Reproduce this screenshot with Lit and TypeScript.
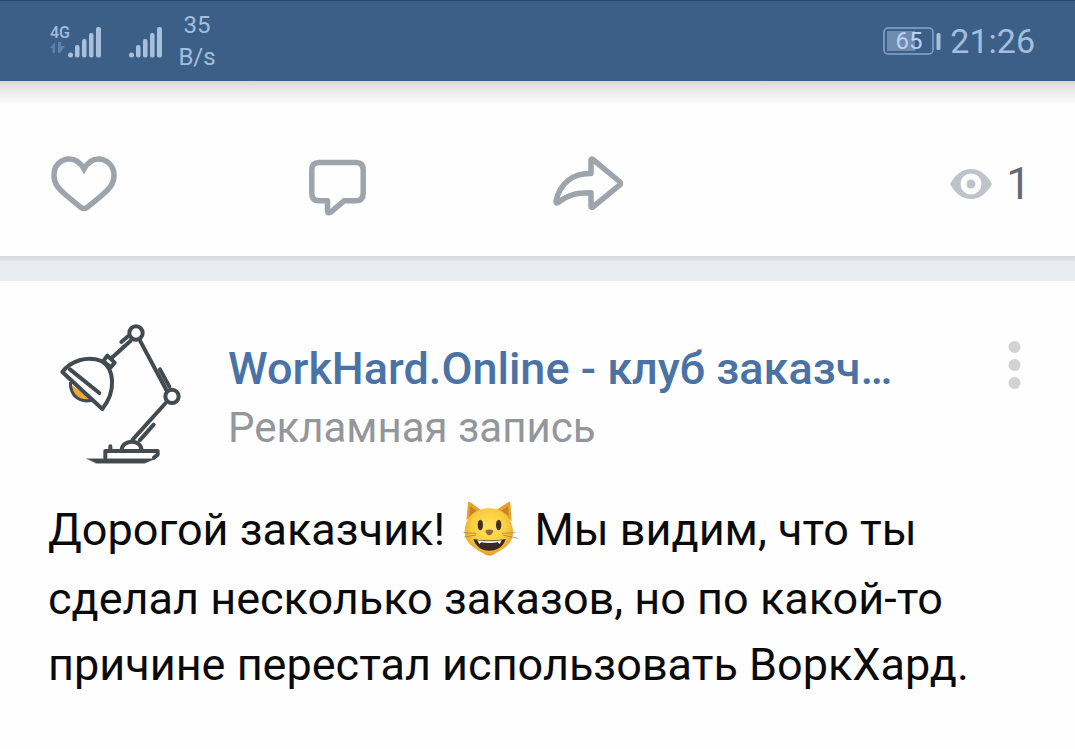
import { LitElement, html, css, svg } from "lit";
import { customElement } from "lit/decorators.js";

const signal = svg`
  <g fill="#a9c0dc">
    <circle cx="2.5" cy="30" r="2.5"/>
    <rect x="7" y="20" width="4.5" height="12.5" rx="2"/>
    <rect x="14" y="14" width="4.5" height="18.5" rx="2"/>
    <rect x="21" y="8" width="4.5" height="24.5" rx="2"/>
    <rect x="28" y="2" width="5" height="30.5" rx="2"/>
  </g>`;

@customElement("status-bar")
class StatusBar extends LitElement {
  static styles = css`
    :host { display: block; position: relative; z-index: 1; overflow-x: clip; }
    .bar {
      display: flex; align-items: center; box-sizing: border-box; height: 81px;
      padding: 0 40px 0 50px; background: #3c5f88; color: #a3bedd;
      border-top: 1px solid #27476b;
    }
    .shade { position: absolute; left: 0; right: 0; top: 100%; height: 24px; background: linear-gradient(#d8d8da, #e9e9ea 35%, rgba(254, 254, 254, 0)); }
    .net { display: flex; flex-direction: column; width: 18px; height: 34px; }
    .gen { font-size: 16px; line-height: 18px; font-weight: 500; }
    .signal { display: block; width: 33px; height: 33px; }
    .second { margin-left: 28px; }
    .rate { margin-left: 16px; width: 38px; font-size: 24px; line-height: 32px; text-align: center; }
    .battery { display: block; margin-left: auto; width: 58px; height: 28px; }
    .level { font: 400 24px Roboto, sans-serif; }
    .time { margin-left: 9px; font-size: 34px; line-height: 40px; }
  `;
  render() {
    return html`
      <header class="bar">
        <div class="net">
          <span class="gen">4G</span>
          <svg width="16" height="11" viewBox="0 0 16 11" fill="#5e80a9"><path d="M0 6 5 0V11H2.500V6ZM8 0H11V4H15L10 11H8Z"/></svg>
        </div>
        <svg class="signal" viewBox="0 0 33 33">${signal}</svg>
        <svg class="signal second" viewBox="0 0 33 33">${signal}</svg>
        <div class="rate">35 B/s</div>
        <svg class="battery" viewBox="0 0 58 28" role="img" aria-label="65%">
          <rect x="1" y="1" width="49" height="26" rx="4" fill="none" stroke="#86a6cb" stroke-width="1.500"/>
          <rect x="4" y="4" width="28" height="20" fill="#6f8cb0"/>
          <rect x="53.500" y="6" width="4" height="17" rx="1.500" fill="#a9c0dc"/>
          <text class="level" x="26" y="22" text-anchor="middle" fill="#b9d2ee">65</text>
        </svg>
        <time class="time">21:26</time>
      </header>
      <div class="shade"></div>`;
  }
}

@customElement("post-actions")
class PostActions extends LitElement {
  static styles = css`
    :host { display: block; }
    .row {
      display: grid; grid-template-columns: 26.3% 25% 1fr auto; align-items: center;
      box-sizing: border-box; height: 175px; padding: 30px 44px 0 51px; background: #fefefe;
    }
    .action { display: block; justify-self: start; margin: 0; padding: 0; border: 0; background: none; cursor: pointer; }
    .icon { display: block; overflow: visible; fill: none; stroke: #9ea4ab; stroke-width: 5.5; stroke-linejoin: round; stroke-linecap: round; }
    .views { display: flex; align-items: center; gap: 14px; color: #656a71; font-size: 44px; line-height: 54px; }
    .eye { display: block; }
  `;
  render() {
    return html`
      <div class="row">
        <button class="action" aria-label="Нравится">
          <svg class="icon" width="66" height="60" viewBox="51 154 66 60"><path stroke-linejoin="miter" d="M84 169C80 162 75 159 69.500 159C60 159 54 166 54 175.500C54 185 60 190 67 196L81 207.500Q84 209.500 87 207.500L101 196C108 190 114 185 114 175.500C114 166 107 159 98.500 159C93 159 88 162 84 169Z"/></svg>
        </button>
        <button class="action" aria-label="Комментировать">
          <svg class="icon" width="58" height="60" viewBox="309 154 58 60"><path d="M319 162.500H356Q363.200 162.500 363.200 170V193Q363.200 200.800 356 200.800H344L330.500 212.300Q327.500 213.800 327.500 211V200.800H319Q311.800 200.800 311.800 193V170Q311.800 162.500 319 162.500Z"/></svg>
        </button>
        <button class="action" aria-label="Поделиться">
          <svg class="icon" width="71" height="60" viewBox="554 154 71 60"><path d="M591 173.500V160.500Q591 158 593.500 160L619.500 181.500Q621.500 183.500 619.500 185.200L593.500 206.500Q591 208.500 591 206V192.800C577 192.500 568 194.500 558 202.500Q555.500 204 556 201C560 183 573 173 591 173.500Z"/></svg>
        </button>
        <div class="views">
          <svg class="eye" width="42" height="32" viewBox="0 0 42 32" aria-label="Просмотры">
            <path fill="#bfc4ca" d="M0 16C5 7 12 1 21 1S37 7 42 16C37 25 30 31 21 31S5 25 0 16Z"/>
            <circle cx="21" cy="16" r="10.500" fill="#fff"/><circle cx="21" cy="16" r="4.500" fill="#bfc4ca"/>
          </svg>
          <span>1</span>
        </div>
      </div>`;
  }
}

@customElement("feed-post")
class FeedPost extends LitElement {
  static styles = css`
    :host { display: block; }
    .head { display: flex; align-items: flex-start; padding: 40px 54px 0 49px; }
    .avatar { display: block; flex: none; width: 144px; height: 144px; }
    .info { flex: 1; min-width: 0; margin: 18px 0 0 35px; }
    .name {
      display: block; overflow: hidden; text-overflow: ellipsis; white-space: nowrap;
      color: #4a72a4; font-size: 45px; line-height: 60px; font-weight: 500; text-decoration: none;
    }
    .kind { margin: 0; color: #93969b; font-size: 42px; line-height: 58px; }
    .menu { display: block; margin: 19px 0 0; padding: 0; border: 0; background: none; cursor: pointer; }
    .dots { display: block; }
    .text { margin: 29px 40px 0 48px; color: #0a0a0a; font-size: 45px; line-height: 66px; }
    .line { display: block; }
    .first { line-height: 72px; }
    .cat { width: 57px; height: 57px; vertical-align: -12px; margin: 0 5px; }
  `;
  render() {
    return html`
      <article>
        <div class="head">
          <svg class="avatar" viewBox="27 33 432 432" fill="none" stroke="#424b50" stroke-width="12" stroke-linecap="round" stroke-linejoin="round">
            <path d="M91 222C92 247 110 270 145 273L157 270Z" fill="#edab35" stroke="none"/>
            <path d="M91 220C92 255 116 279 154 271" stroke-width="9"/>
            <path d="M67 186C92 153 141 136 184 153C223 175 230 242 187 297Z" fill="#fff"/>
            <path d="M90 178 178 249"/>
            <path d="M190 153 202 137 224 158 212 172Z"/>
            <path d="M214 145 272 92M244 96 265 78M300 92 379 240M360 178 388 230"/>
            <circle cx="288" cy="69" r="20" fill="#fff"/>
            <circle cx="396" cy="259" r="20" fill="#fff"/>
            <path d="M377 279 278 389M341 344 299 391"/>
            <path d="M245 420C247 388 301 386 305 420" fill="#fff"/>
            <path d="M211 409V419M196 443V423H353V434L342 443"/>
            <path d="M141 446H346L314 460H169Z" fill="#424b50" stroke-width="1"/>
          </svg>
          <div class="info">
            <a class="name" href="#">WorkHard.Online - клуб заказч…</a>
            <p class="kind">Рекламная запись</p>
          </div>
          <button class="menu" aria-label="Меню">
            <svg class="dots" width="13" height="50" viewBox="0 0 13 50" fill="#d3d3d3"><circle cx="6.500" cy="7" r="6"/><circle cx="6.500" cy="25" r="6"/><circle cx="6.500" cy="43" r="6"/></svg>
          </button>
        </div>
        <p class="text">
          <span class="line first">Дорогой заказчик!
            <svg class="cat" viewBox="66 32 171 171" role="img" aria-label="😺">
              <defs><radialGradient id="fur" cx=".5" cy=".4" r=".62"><stop offset="0" stop-color="#ffe45e"/><stop offset=".6" stop-color="#f9cd3d"/><stop offset="1" stop-color="#e39a24"/></radialGradient></defs>
              <path fill="#e8a229" d="M82 92 87 40Q89 35 94 39L131 66ZM172 62 208 38Q213 36 214 42L218 96Z"/>
              <path fill="#c9842a" d="M91 82 93 50 116 67ZM187 65 207 50 209 80Z"/>
              <path fill="url(#fur)" d="M150 57C109 57 79 84 77 126C76 159 105 176 131 191Q151 207 171 191C198 176 224 159 222 126C220 84 191 57 150 57Z"/>
              <ellipse cx="124" cy="107" rx="8" ry="16" fill="#42301e"/><ellipse cx="179" cy="107" rx="8" ry="16" fill="#42301e"/>
              <path fill="#9c6043" d="M139 124Q151 117 163 124Q160 136 151 138Q142 136 139 124Z"/>
              <path fill="#3b2924" d="M103 149Q151 158 200 149C194 172 174 184 151 184S110 172 103 149Z"/>
              <path fill="#fff" d="M115 153Q151 159 188 153L182 164 176 159Q151 163 126 159L121 164Z"/>
              <path fill="none" stroke="#927348" stroke-width="2" d="M74 130 112 132M76 143 111 137M190 132 230 130M191 137 237 147"/>
            </svg>
            Мы видим, что ты</span>
          <span class="line">сделал несколько заказов, но по какой-то</span>
          <span class="line">причине перестал использовать ВоркХард.</span>
        </p>
      </article>`;
  }
}

@customElement("app-root")
class AppRoot extends LitElement {
  static styles = css`
    :host { display: block; min-height: 100vh; background: #fefefe; font-family: Roboto, "Noto Sans", sans-serif; }
    .gap { height: 25px; background: linear-gradient(#d5d8dc, #dcdfe3 3px, #e9ecf0 6px); }
  `;
  render() {
    return html`
      <status-bar></status-bar>
      <main>
        <post-actions></post-actions>
        <div class="gap"></div>
        <feed-post></feed-post>
      </main>`;
  }
}
